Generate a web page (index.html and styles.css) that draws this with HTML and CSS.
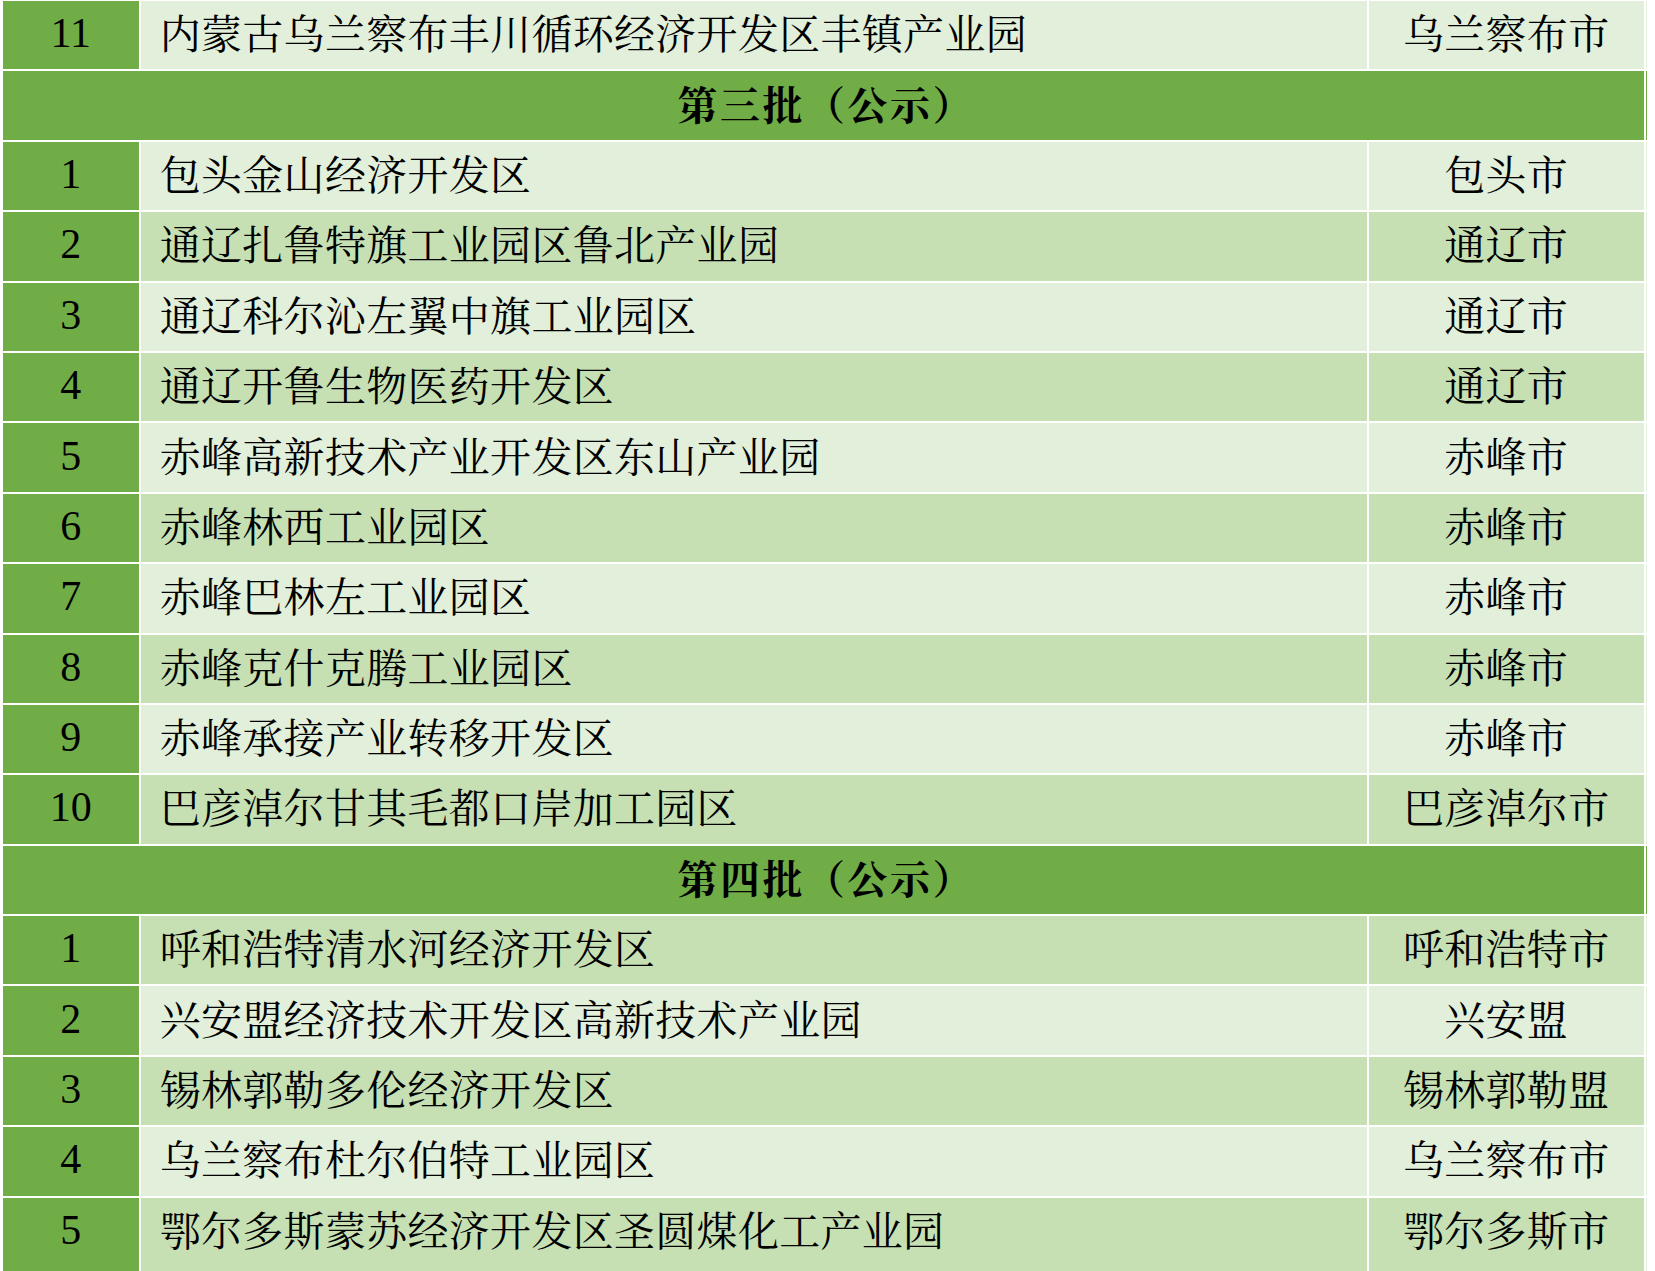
FILE: index.html
```html
<!DOCTYPE html>
<html lang="zh-CN">
<head>
<meta charset="utf-8">
<title>园区名单</title>
<link rel="stylesheet" href="styles.css">
</head>
<body>
<div class="sheet">
  <div class="row light"><div class="num">11</div><div class="name">内蒙古乌兰察布丰川循环经济开发区丰镇产业园</div><div class="city">乌兰察布市</div><div class="strip"></div></div>
  <div class="row head"><div class="title">第三批（公示）</div><div class="strip"></div></div>
  <div class="row light"><div class="num">1</div><div class="name">包头金山经济开发区</div><div class="city">包头市</div><div class="strip"></div></div>
  <div class="row mid"><div class="num">2</div><div class="name">通辽扎鲁特旗工业园区鲁北产业园</div><div class="city">通辽市</div><div class="strip"></div></div>
  <div class="row light"><div class="num">3</div><div class="name">通辽科尔沁左翼中旗工业园区</div><div class="city">通辽市</div><div class="strip"></div></div>
  <div class="row mid"><div class="num">4</div><div class="name">通辽开鲁生物医药开发区</div><div class="city">通辽市</div><div class="strip"></div></div>
  <div class="row light"><div class="num">5</div><div class="name">赤峰高新技术产业开发区东山产业园</div><div class="city">赤峰市</div><div class="strip"></div></div>
  <div class="row mid"><div class="num">6</div><div class="name">赤峰林西工业园区</div><div class="city">赤峰市</div><div class="strip"></div></div>
  <div class="row light"><div class="num">7</div><div class="name">赤峰巴林左工业园区</div><div class="city">赤峰市</div><div class="strip"></div></div>
  <div class="row mid"><div class="num">8</div><div class="name">赤峰克什克腾工业园区</div><div class="city">赤峰市</div><div class="strip"></div></div>
  <div class="row light"><div class="num">9</div><div class="name">赤峰承接产业转移开发区</div><div class="city">赤峰市</div><div class="strip"></div></div>
  <div class="row mid"><div class="num">10</div><div class="name">巴彦淖尔甘其毛都口岸加工园区</div><div class="city">巴彦淖尔市</div><div class="strip"></div></div>
  <div class="row head"><div class="title">第四批（公示）</div><div class="strip"></div></div>
  <div class="row mid"><div class="num">1</div><div class="name">呼和浩特清水河经济开发区</div><div class="city">呼和浩特市</div><div class="strip"></div></div>
  <div class="row light"><div class="num">2</div><div class="name">兴安盟经济技术开发区高新技术产业园</div><div class="city">兴安盟</div><div class="strip"></div></div>
  <div class="row mid"><div class="num">3</div><div class="name">锡林郭勒多伦经济开发区</div><div class="city">锡林郭勒盟</div><div class="strip"></div></div>
  <div class="row light"><div class="num">4</div><div class="name">乌兰察布杜尔伯特工业园区</div><div class="city">乌兰察布市</div><div class="strip"></div></div>
  <div class="row mid last"><div class="num">5</div><div class="name">鄂尔多斯蒙苏经济开发区圣圆煤化工产业园</div><div class="city">鄂尔多斯市</div><div class="strip"></div></div>
</div>
</body>
</html>
```

FILE: styles.css
```css
html, body {
  margin: 0;
  padding: 0;
  background: #ffffff;
  overflow: hidden;
}

.sheet {
  display: flex;
  flex-direction: column;
  gap: 2px;
  padding: 1px 0 0 3px;
  font-family: "Noto Serif CJK SC", "Noto Sans CJK SC", sans-serif;
  color: #000000;
}

.row {
  display: grid;
  grid-template-columns: 135.7px 1226px 275px 1px;
  column-gap: 2px;
  height: 68.4px;
}

.row.last {
  height: 80px;
}

.row > div {
  display: flex;
  align-items: center;
  padding-bottom: 7px;
  box-sizing: border-box;
}

.row.last > div {
  padding-bottom: 19px;
}

.num {
  justify-content: center;
  background: #70ad47;
  font-family: "Liberation Serif", "Times New Roman", serif;
  font-size: 42px;
}

.row > .num {
  padding-bottom: 4px;
}

.row.last > .num {
  padding-bottom: 16px;
}

.name {
  padding-left: 19px;
  font-size: 41px;
  letter-spacing: 0.3px;
  white-space: nowrap;
}

.city {
  justify-content: center;
  font-size: 41px;
  letter-spacing: 0.3px;
  white-space: nowrap;
}

.light .name,
.light .city,
.light .strip {
  background: #e2efda;
}

.mid .name,
.mid .city {
  background: #c6e0b4;
}

.mid .strip {
  background: #e2efda;
}

.head .title {
  grid-column: 1 / 4;
  justify-content: center;
  background: #70ad47;
  font-size: 40px;
  font-weight: 700;
  letter-spacing: 2.5px;
  padding-left: 6px;
}

.head .strip {
  background: #70ad47;
}
```
